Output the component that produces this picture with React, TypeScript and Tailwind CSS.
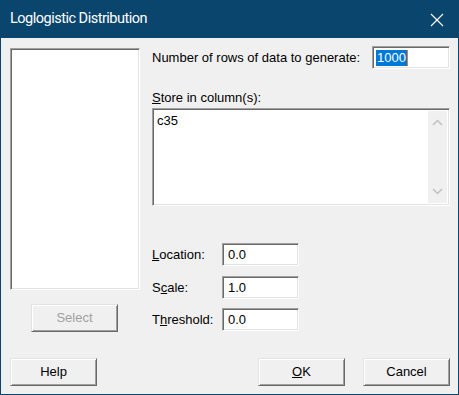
const sunken =
  "border border-t-[#a0a0a0] border-l-[#a0a0a0] border-r-white border-b-white shadow-[inset_1px_1px_#696969,inset_-1px_-1px_#e3e3e3] bg-white";

const raised =
  "border border-t-[#e3e3e3] border-l-[#e3e3e3] border-r-[#696969] border-b-[#696969] shadow-[inset_1px_1px_#ffffff,inset_-1px_-1px_#a0a0a0] bg-[#f0f0f0]";

const Field = ({ label, value }: { label: React.ReactNode; value: string }) => (
  <div className="flex items-center h-[23px]">
    <span className="w-[70px]">{label}</span>
    <div className={`${sunken} w-[77px] h-[23px] flex items-center pl-[5px]`}>{value}</div>
  </div>
);

const Button = ({ children, disabled }: { children: React.ReactNode; disabled?: boolean }) => (
  <button
    className={`${raised} w-[87px] h-[28px] flex items-center justify-center ${
      disabled ? "text-[#a0a0a0]" : "text-black"
    }`}
  >
    {children}
  </button>
);

export default function App() {
  return (
    <div
      className="w-[459px] h-[395px] bg-[#0a456d] px-[1px] pb-[1px] flex flex-col text-[13px] text-black"
      style={{ fontFamily: '"Liberation Sans", Arial, sans-serif' }}
    >
      <div className="h-[38px] flex items-center justify-between pl-[9px] pr-[14px] text-white">
        <span
          className="text-[14.5px] tracking-[-0.5px]"
          style={{ fontFamily: 'Roboto, "Liberation Sans", sans-serif' }}
        >
          Loglogistic Distribution
        </span>
        <svg width="14" height="14" viewBox="0 0 14 14" className="mt-[1px]">
          <path d="M1 1 L13 13 M13 1 L1 13" stroke="white" strokeWidth="1.1" />
        </svg>
      </div>

      <div className="flex-1 bg-[#f0f0f0] flex flex-col pl-[9px] pt-[10px] pb-[8px]">
        <div className="flex">
          <div className="flex flex-col w-[130px]">
            <div className={`${sunken} h-[242px]`} />
            <div className="mt-[14px] ml-[21px]">
              <Button disabled>Select</Button>
            </div>
          </div>

          <div className="ml-[12px] w-[298px] flex flex-col -mt-[2px]">
            <div className="flex items-center justify-between h-[23px]">
              <span>
                Number of rows of data to <u>g</u>enerate:
              </span>
              <div className={`${sunken} w-[78px] h-[23px] flex items-center pl-[3px]`}>
                <span className="bg-[#0078d7] text-white leading-[16px] px-[1px]">1000</span>
                <span className="w-[1px] h-[16px] bg-[#f07820]" />
              </div>
            </div>

            <div className="mt-[21px] leading-[15px]">
              <u>S</u>tore in column(s):
            </div>

            <div className={`${sunken} mt-[3px] h-[98px] flex`}>
              <div className="flex-1 pl-[4px] pt-[2px]">c35</div>
              <div className="w-[19px] my-[2px] mr-[2px] bg-[#f0f0f0] flex flex-col items-center justify-between py-[8px]">
                <svg width="11" height="7" viewBox="0 0 11 7">
                  <path d="M1 6 L5.5 1.5 L10 6" fill="none" stroke="#c0c0c0" strokeWidth="1.5" />
                </svg>
                <svg width="11" height="7" viewBox="0 0 11 7">
                  <path d="M1 1 L5.5 5.5 L10 1" fill="none" stroke="#c0c0c0" strokeWidth="1.5" />
                </svg>
              </div>
            </div>

            <div className="mt-[37px] flex flex-col gap-[10px]">
              <Field label={<><u>L</u>ocation:</>} value="0.0" />
              <Field label={<>S<u>c</u>ale:</>} value="1.0" />
              <div className="-mt-[1px]">
                <Field label={<>T<u>h</u>reshold:</>} value="0.0" />
              </div>
            </div>
          </div>
        </div>

        <div className="mt-auto flex items-center">
          <Button>Help</Button>
          <div className="ml-auto flex gap-[18px] mr-[8px]">
            <Button>
              <u>O</u>K
            </Button>
            <Button>Cancel</Button>
          </div>
        </div>
      </div>
    </div>
  );
}
